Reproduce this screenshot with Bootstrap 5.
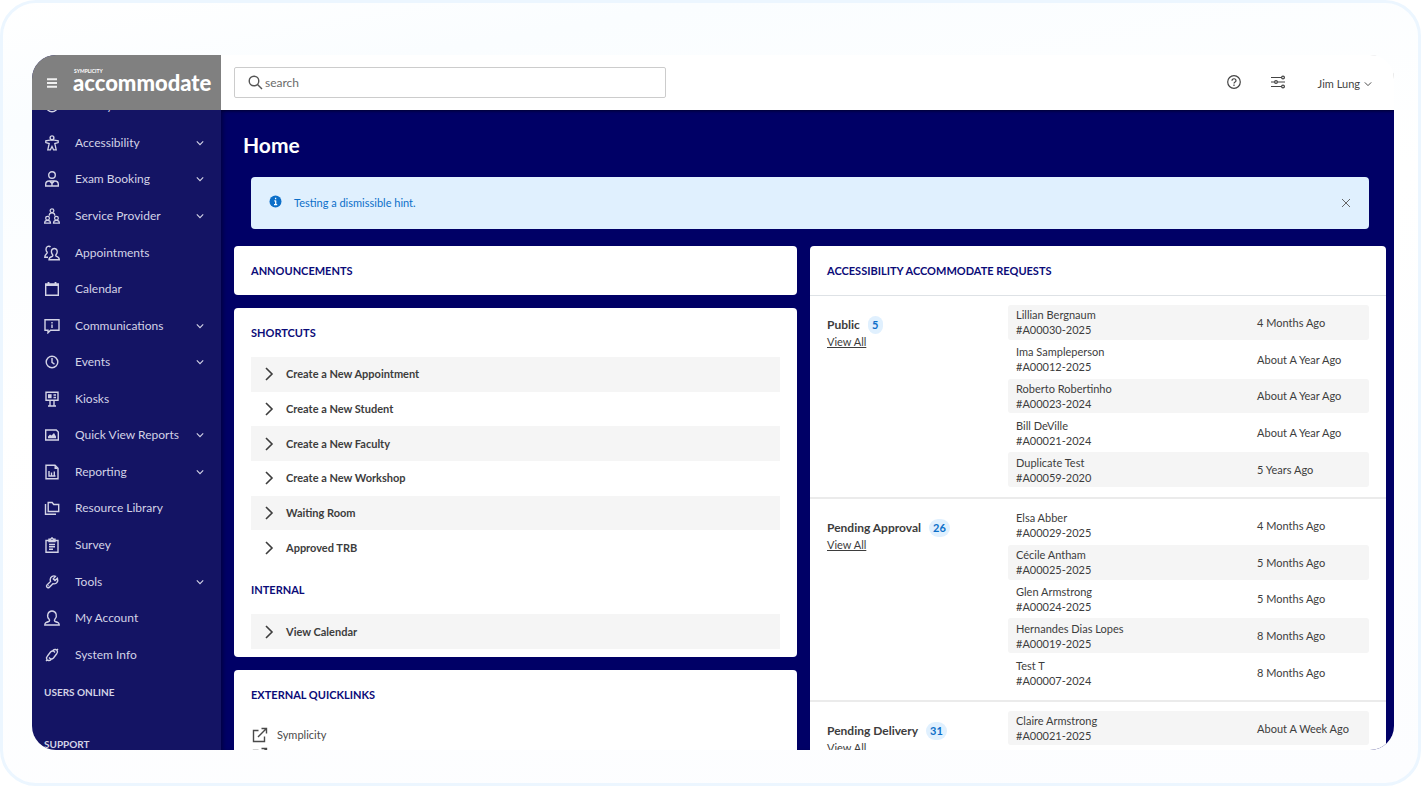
<!DOCTYPE html>
<html lang="en">
<head>
<meta charset="utf-8">
<meta name="viewport" content="width=device-width, initial-scale=1">
<title>Accommodate – Home</title>
<link href="https://cdn.jsdelivr.net/npm/bootstrap@5.3.0/dist/css/bootstrap.min.css" rel="stylesheet">
<style>
  :root { --navy: #000066; --side: #141464; --ink: #3d3d3d; --stripe: #f5f5f5; }
  body { font-family: Lato, "Noto Sans", sans-serif; font-size: 11px; line-height: 16px; color: var(--ink); background: #fff; -webkit-text-stroke: 0; }
  a { color: inherit; text-decoration: none; }
  .stage { height: 100vh; padding-bottom: 4px; }
  .frame { border: 3px solid #ecf6ff; border-radius: 36px; padding: 52px 24px 33px 29px; min-height: 0;
           background: linear-gradient(170deg, #fff 0%, #fafdff 12%, #fff 40%, #fcfdff 100%); }
  .app { border-radius: 24px; min-height: 0; }
  .ic { width: 16px; height: 16px; fill: none; stroke: currentColor; stroke-width: 1.4; flex: none; }
  .chev { width: 8px; height: 8px; stroke-width: 1.4; }

  .side { width: 189px; background: var(--side); color: #d3d3e6; }
  .brandbar { height: 55px; background: #808080; color: #fff; padding-left: 15px; z-index: 2; }
  .brandbar button { width: 11px; }
  .logo { font-size: 22px; line-height: 24px; font-weight: 900; margin-left: 15px; color: #fff; }
  .logo span { position: absolute; left: 1px; top: -3px; font-size: 5px; line-height: 6px; font-weight: 700; }
  .menu { display: grid; grid-auto-rows: 1fr; height: 585px; font-size: 12px; }
  .menu a { padding: 0 17px 0 12px; }
  .menu .ic:first-child { margin-right: 15px; }
  .sidehead { font-size: 10px; font-weight: 700; padding: 11px 12px 36px; }
  .sidehead:last-child { padding: 0 12px; height: 14px; }

  .topbar { height: 55px; padding: 0 22px 0 13px; background: #fff; box-shadow: 0 1px 3px rgba(0,0,0,.5); z-index: 1; }
  .search { width: 38%; height: 31px; border: 1px solid #ccc; border-radius: 2px; padding: 0 12px; }
  .search input { border: 0; outline: 0; font-size: 12px; margin-left: 2px; color: var(--ink); }
  .search input::placeholder { color: #6b6b6b; opacity: 1; }
  .glass { color: #555; }
  .tools, .tools .btn { color: #444; }
  .tools .ic { stroke-width: 1.2; }
  .user { font-size: 11px; line-height: 16px; padding-top: 2px; }

  .work { background: var(--navy); padding: 23px 8px 0 13px; box-shadow: inset 4px 0 4px -2px rgba(0,0,0,.35); }
  .work h1 { font-size: 21px; line-height: 24px; font-weight: 700; color: #fff; margin: 0 0 20px 9px; }
  .hint { background: #e0f0fe; color: #0c6fc9; border-radius: 4px; height: 52px; margin: 0 17px 17px; padding: 0 18px; }
  .hint button { color: #666; }
  .cols { gap: 13px; }
  .colL { flex: 563 1 0; gap: 13px; min-width: 0; }
  .colR { flex: 576 1 0; min-width: 0; }
  .panel { background: #fff; border-radius: 4px; }
  .panel h2 { font-size: 11px; line-height: 49px; font-weight: 700; color: #0b0b78; margin: 0; padding: 0 17px; }
  .rows { display: grid; grid-auto-rows: 1fr; margin: 0 17px; }
  .rows li:nth-child(odd) { background: var(--stripe); }
  .rows a { padding: 0 10px; font-weight: 700; gap: 9px; }
  .six { height: 208px; }
  .one { height: 35px; }
  .ext { padding: 6px 18px 0; }
  .ext a { height: 20px; gap: 9px; color: #4a4a4a; }

  .grp { border-bottom: 2px solid #ebebeb; padding: 7px 17px 8px; }
  .grp:last-child { border-bottom: 0; }
  .lbl { width: 181px; padding-top: 13px; flex: none; }
  .lbl h3 { font-size: 12px; line-height: 18px; font-weight: 700; margin: 0; gap: 8px; }
  .count { background: #e0f0fe; color: #0c6fc9; border-radius: 9px; font-size: 11px; line-height: 17px; min-width: 15px; padding: 0 4px; text-align: center; }
  .reqs { border-collapse: separate; border-spacing: 0 2px; flex: 1; line-height: 15px; align-self: flex-start; }
  .full { height: 186px; }
  .reqs td { padding: 2px 8px; }
  .reqs td:first-child { width: 69%; border-radius: 3px 0 0 3px; }
  .reqs td:last-child { padding-left: 0; border-radius: 0 3px 3px 0; }
  .oddrows tr:nth-child(odd) td, .evenrows tr:nth-child(even) td { background: var(--stripe); }
</style>
</head>
<body>
<svg class="d-none" xmlns="http://www.w3.org/2000/svg">
  <symbol id="down" viewBox="0 0 10 10"><path d="M1 3l4 4 4-4"/></symbol>
  <symbol id="right" viewBox="0 0 16 16"><path d="M5 2l6 6-6 6" stroke-width="1.6"/></symbol>
  <symbol id="access" viewBox="0 0 16 16"><circle cx="8" cy="2.800" r="1.900"/><path d="M5.800 5.200L1.800 5.800v1.800l3.400.9L3.800 14.800h2.600L8 11.500l1.600 3.300h2.600L10.800 8.500l3.400-.9V5.800l-4-.6z" stroke-width="1.300"/></symbol>
  <symbol id="exam" viewBox="0 0 16 16"><circle cx="8" cy="4" r="3.300"/><path d="M1.700 15v-1.500c0-2 1.500-3.500 3.500-3.500h5.600c2 0 3.500 1.500 3.500 3.500V15zM5.500 10L8 12.500 10.500 10M8 12v3"/></symbol>
  <symbol id="provider" viewBox="0 0 18 18"><circle cx="9" cy="3" r="2.100"/><path d="M5.800 8.700c0-2 1-3.200 3.200-3.200s3.200 1.200 3.200 3.200"/><circle cx="4" cy="11.500" r="2.100"/><path d="M.7 17c0-2 1-3.200 3.300-3.200s3.300 1.200 3.300 3.200z"/><circle cx="14" cy="11.500" r="2.100"/><path d="M10.700 17c0-2 1-3.200 3.300-3.200s3.300 1.200 3.300 3.200z"/></symbol>
  <symbol id="appts" viewBox="0 0 16 16"><path d="M6.500 2C5.500.8 2 1 2 4.200c0 1.500.5 2.300 1.200 3C3.500 9 .8 9 .8 12.300H4M5 14.800h10.300c0-2.600-1-2.800-3-3.500-.8-.3-.6-1.300 0-2 1.500-2 1.200-5.800-2-5.800s-3.500 3.800-2 5.800c.6.700.8 1.700 0 2-2 .7-3.300.9-3.300 3.500z"/></symbol>
  <symbol id="cal" viewBox="0 0 16 16"><path d="M1.700 3h12.600v11.300H1.700zM1.700 4.200h12.600"/><path d="M4.500 1v3M11.500 1v3" stroke-width="1.800"/></symbol>
  <symbol id="comm" viewBox="0 0 16 16"><path d="M1 1.700h14v10.600H6.500L4 14.800v-2.500H1zM8 6.500V10M8 4v1.400"/></symbol>
  <symbol id="clock" viewBox="0 0 16 16"><circle cx="8" cy="8" r="5.800"/><path d="M8 4v4.300l2.500 1.900"/></symbol>
  <symbol id="kiosk" viewBox="0 0 16 16"><path d="M2 1.200h12v8H2zM6 9.200V15M10 9.200V15M4 15h8M9.500 4H12M9.500 6.500H12"/><path d="M4 3.200h3.600v4H4z" fill="currentColor" stroke="none"/></symbol>
  <symbol id="quick" viewBox="0 0 16 16"><path d="M1.700 3h10.600l2 2v8H1.700z"/><path d="M4 11.200V9.500l2-2 1.500 1L10 6l2 3.500v1.700z" fill="currentColor" stroke="none"/></symbol>
  <symbol id="report" viewBox="0 0 16 16"><path d="M2 1.200h9l3 3v10.600H2z"/><path d="M5 7v5h6.500M7.500 8.500V12M10.300 7.500V12"/><path d="M10.500 1v4H14z" fill="currentColor" stroke="none"/></symbol>
  <symbol id="folder" viewBox="0 0 16 16"><path d="M4.200 2.500h4l1.500 2h5v7H4.200zM1.500 4v10.300H12"/></symbol>
  <symbol id="survey" viewBox="0 0 16 16"><path d="M2 3.500h12v11.700H2zM5 3.500V2.200h1.500L8 .8l1.500 1.400H11v2.300H5zM5 7.500h6M5 9.800h6M5 12.200h4"/></symbol>
  <symbol id="tools" viewBox="0 0 16 16"><path d="M11.500 2.300C9.500 1.300 6.300 2.500 6.200 5.500c0 .8.200 1.300.4 1.900L3 11c-1.400 1.400.7 3.800 2.200 2.400L8.900 9.700c4 .9 5.500-2.700 4.500-5.500L11 6.600 9.300 4.900zM4.300 11.600l.500.500"/></symbol>
  <symbol id="user" viewBox="0 0 16 16"><path d="M.8 15h14.400c0-2.200-1-2.600-4-3.500-1-.3-1-1.500-.2-2.400C13.500 6.500 12.500 1 8 1S2.500 6.500 5 9.100c.8.900.8 2.100-.2 2.400-3 .9-4 1.300-4 3.500z"/></symbol>
  <symbol id="plug" viewBox="0 0 16 16"><path d="M6.800 13c-1.500 1-3.300.6-4-.6-.7-1.300-.2-2.500.5-3.200L6.500 5c1-1 2.200-1.200 3.200-.8M9.200 3c1.500-1 3.300-.6 4 .6.700 1.300.2 2.500-.5 3.200L9.500 11c-1 1-2.200 1.200-3.200.8M12.700 3.300l1.300-1.300M3.300 12.700L2 14M8.500 3l2.500 2.500M5 10.500L7.500 13"/></symbol>
  <symbol id="open" viewBox="0 0 16 16"><path d="M6.500 3.500H1.500v11h11V9.500M9.500 1.500h5v5M14.200 1.800L6 10"/></symbol>
</svg>

<div class="stage d-flex flex-column">
<div class="frame flex-grow-1 d-flex flex-column">
<div class="app d-flex flex-grow-1 overflow-hidden">

  <aside class="side d-flex flex-column flex-shrink-0">
    <div class="brandbar d-flex align-items-center flex-shrink-0">
      <button type="button" class="btn p-0 border-0 d-flex" aria-label="Menu"><svg width="11" height="10" viewBox="0 0 11 10"><path d="M0 1.200h10M0 5h10M0 8.800h10" stroke="#f0f0f0" stroke-width="2"/></svg></button>
      <a href="#" class="logo position-relative"><span>SYMPLICITY</span>accommodate</a>
    </div>
    <nav class="flex-grow-1 overflow-hidden d-flex flex-column justify-content-end" aria-label="Main">
      <ul class="menu list-unstyled m-0 flex-shrink-0">
        <li class="d-flex"><a class="d-flex align-items-center w-100" href="#"><svg class="ic"><use href="#clock"/></svg>Faculty</a></li>
        <li class="d-flex"><a class="d-flex align-items-center w-100" href="#"><svg class="ic"><use href="#access"/></svg>Accessibility<svg class="ic chev ms-auto"><use href="#down"/></svg></a></li>
        <li class="d-flex"><a class="d-flex align-items-center w-100" href="#"><svg class="ic"><use href="#exam"/></svg>Exam Booking<svg class="ic chev ms-auto"><use href="#down"/></svg></a></li>
        <li class="d-flex"><a class="d-flex align-items-center w-100" href="#"><svg class="ic"><use href="#provider"/></svg>Service Provider<svg class="ic chev ms-auto"><use href="#down"/></svg></a></li>
        <li class="d-flex"><a class="d-flex align-items-center w-100" href="#"><svg class="ic"><use href="#appts"/></svg>Appointments</a></li>
        <li class="d-flex"><a class="d-flex align-items-center w-100" href="#"><svg class="ic"><use href="#cal"/></svg>Calendar</a></li>
        <li class="d-flex"><a class="d-flex align-items-center w-100" href="#"><svg class="ic"><use href="#comm"/></svg>Communications<svg class="ic chev ms-auto"><use href="#down"/></svg></a></li>
        <li class="d-flex"><a class="d-flex align-items-center w-100" href="#"><svg class="ic"><use href="#clock"/></svg>Events<svg class="ic chev ms-auto"><use href="#down"/></svg></a></li>
        <li class="d-flex"><a class="d-flex align-items-center w-100" href="#"><svg class="ic"><use href="#kiosk"/></svg>Kiosks</a></li>
        <li class="d-flex"><a class="d-flex align-items-center w-100" href="#"><svg class="ic"><use href="#quick"/></svg>Quick View Reports<svg class="ic chev ms-auto"><use href="#down"/></svg></a></li>
        <li class="d-flex"><a class="d-flex align-items-center w-100" href="#"><svg class="ic"><use href="#report"/></svg>Reporting<svg class="ic chev ms-auto"><use href="#down"/></svg></a></li>
        <li class="d-flex"><a class="d-flex align-items-center w-100" href="#"><svg class="ic"><use href="#folder"/></svg>Resource Library</a></li>
        <li class="d-flex"><a class="d-flex align-items-center w-100" href="#"><svg class="ic"><use href="#survey"/></svg>Survey</a></li>
        <li class="d-flex"><a class="d-flex align-items-center w-100" href="#"><svg class="ic"><use href="#tools"/></svg>Tools<svg class="ic chev ms-auto"><use href="#down"/></svg></a></li>
        <li class="d-flex"><a class="d-flex align-items-center w-100" href="#"><svg class="ic"><use href="#user"/></svg>My Account</a></li>
        <li class="d-flex"><a class="d-flex align-items-center w-100" href="#"><svg class="ic"><use href="#plug"/></svg>System Info</a></li>
      </ul>
      <div class="sidehead flex-shrink-0">USERS ONLINE</div>
      <div class="sidehead flex-shrink-0">SUPPORT</div>
    </nav>
  </aside>

  <div class="flex-grow-1 d-flex flex-column overflow-hidden">
    <header class="topbar d-flex align-items-center flex-shrink-0">
      <label class="search d-flex align-items-center">
        <svg class="ic glass" viewBox="0 0 16 16"><circle cx="7" cy="6" r="4.800"/><path d="M10.500 9.500l4.500 4.500"/></svg>
        <input type="search" class="flex-grow-1 p-0" placeholder="search" aria-label="Search">
      </label>
      <div class="tools d-flex align-items-center ms-auto">
        <button type="button" class="btn p-0 border-0 d-flex me-4" aria-label="Help"><svg class="ic" viewBox="0 0 16 16"><circle cx="8" cy="7" r="6.300"/><path d="M6 5.700c0-2.700 4-2.500 4 0C10 7.200 8 7 8 8.600M8 9.600v1.300"/></svg></button>
        <button type="button" class="btn p-0 border-0 d-flex ms-1 me-4" aria-label="Settings"><svg class="ic" viewBox="0 0 16 16"><path d="M1 2.500h10.500M1 7h3.500M7.500 7H15M1 11.500h10.500"/><circle cx="13" cy="2.500" r="1.400"/><circle cx="6" cy="7" r="1.400"/><circle cx="13" cy="11.500" r="1.400"/></svg></button>
        <button type="button" class="user btn px-0 pb-0 border-0 d-flex align-items-center gap-1 ms-2">Jim Lung<svg class="ic chev"><use href="#down"/></svg></button>
      </div>
    </header>

    <main class="work flex-grow-1 overflow-hidden d-flex flex-column">
      <h1>Home</h1>
      <div class="hint d-flex align-items-center flex-shrink-0" role="alert">
        <svg width="13" height="16" viewBox="0 0 13 16"><circle cx="6.500" cy="6.500" r="6" fill="currentColor"/><path d="M6.700 5.500v4M5.300 5.800h1.500M5 9.600h3.200M6.600 2.800v1.500" stroke="#fff" stroke-width="1.300"/></svg>
        <span class="ms-2 ps-1">Testing a dismissible hint.</span>
        <button type="button" class="btn p-0 border-0 d-flex ms-auto" aria-label="Dismiss"><svg width="10" height="10" viewBox="0 0 10 10"><path d="M1 1l8 8M9 1L1 9" stroke="currentColor" stroke-width="1"/></svg></button>
      </div>
      <div class="cols d-flex flex-grow-1">
        <div class="colL d-flex flex-column">
          <section class="panel"><h2>ANNOUNCEMENTS</h2></section>
          <section class="panel pb-2">
            <h2>SHORTCUTS</h2>
            <ul class="rows six list-unstyled">
              <li class="d-flex"><a class="d-flex align-items-center w-100" href="#"><svg class="ic"><use href="#right"/></svg>Create a New Appointment</a></li>
              <li class="d-flex"><a class="d-flex align-items-center w-100" href="#"><svg class="ic"><use href="#right"/></svg>Create a New Student</a></li>
              <li class="d-flex"><a class="d-flex align-items-center w-100" href="#"><svg class="ic"><use href="#right"/></svg>Create a New Faculty</a></li>
              <li class="d-flex"><a class="d-flex align-items-center w-100" href="#"><svg class="ic"><use href="#right"/></svg>Create a New Workshop</a></li>
              <li class="d-flex"><a class="d-flex align-items-center w-100" href="#"><svg class="ic"><use href="#right"/></svg>Waiting Room</a></li>
              <li class="d-flex"><a class="d-flex align-items-center w-100" href="#"><svg class="ic"><use href="#right"/></svg>Approved TRB</a></li>
            </ul>
            <h2>INTERNAL</h2>
            <ul class="rows one list-unstyled">
              <li class="d-flex"><a class="d-flex align-items-center w-100" href="#"><svg class="ic"><use href="#right"/></svg>View Calendar</a></li>
            </ul>
          </section>
          <section class="panel rounded-bottom-0 flex-grow-1">
            <h2>EXTERNAL QUICKLINKS</h2>
            <div class="ext">
              <a class="d-flex align-items-center" href="#"><svg class="ic"><use href="#open"/></svg>Symplicity</a>
              <a class="d-flex align-items-center" href="#"><svg class="ic"><use href="#open"/></svg>Resources</a>
            </div>
          </section>
        </div>
        <section class="colR panel rounded-bottom-0">
          <h2 class="border-bottom">ACCESSIBILITY ACCOMMODATE REQUESTS</h2>
          <div class="grp d-flex">
            <div class="lbl"><h3 class="d-flex">Public <span class="count">5</span></h3><a href="#" class="text-decoration-underline">View All</a></div>
            <table class="reqs full oddrows"><tbody>
              <tr><td>Lillian Bergnaum<br>#A00030-2025</td><td>4 Months Ago</td></tr>
              <tr><td>Ima Sampleperson<br>#A00012-2025</td><td>About A Year Ago</td></tr>
              <tr><td>Roberto Robertinho<br>#A00023-2024</td><td>About A Year Ago</td></tr>
              <tr><td>Bill DeVille<br>#A00021-2024</td><td>About A Year Ago</td></tr>
              <tr><td>Duplicate Test<br>#A00059-2020</td><td>5 Years Ago</td></tr>
            </tbody></table>
          </div>
          <div class="grp d-flex">
            <div class="lbl"><h3 class="d-flex">Pending Approval <span class="count">26</span></h3><a href="#" class="text-decoration-underline">View All</a></div>
            <table class="reqs full evenrows"><tbody>
              <tr><td>Elsa Abber<br>#A00029-2025</td><td>4 Months Ago</td></tr>
              <tr><td>Cécile Antham<br>#A00025-2025</td><td>5 Months Ago</td></tr>
              <tr><td>Glen Armstrong<br>#A00024-2025</td><td>5 Months Ago</td></tr>
              <tr><td>Hernandes Dias Lopes<br>#A00019-2025</td><td>8 Months Ago</td></tr>
              <tr><td>Test T<br>#A00007-2024</td><td>8 Months Ago</td></tr>
            </tbody></table>
          </div>
          <div class="grp d-flex">
            <div class="lbl"><h3 class="d-flex">Pending Delivery <span class="count">31</span></h3><a href="#" class="text-decoration-underline">View All</a></div>
            <table class="reqs oddrows"><tbody>
              <tr><td>Claire Armstrong<br>#A00021-2025</td><td>About A Week Ago</td></tr>
            </tbody></table>
          </div>
        </section>
      </div>
    </main>
  </div>

</div>
</div>
</div>
<script src="https://cdn.jsdelivr.net/npm/bootstrap@5.3.0/dist/js/bootstrap.bundle.min.js"></script>
</body>
</html>
